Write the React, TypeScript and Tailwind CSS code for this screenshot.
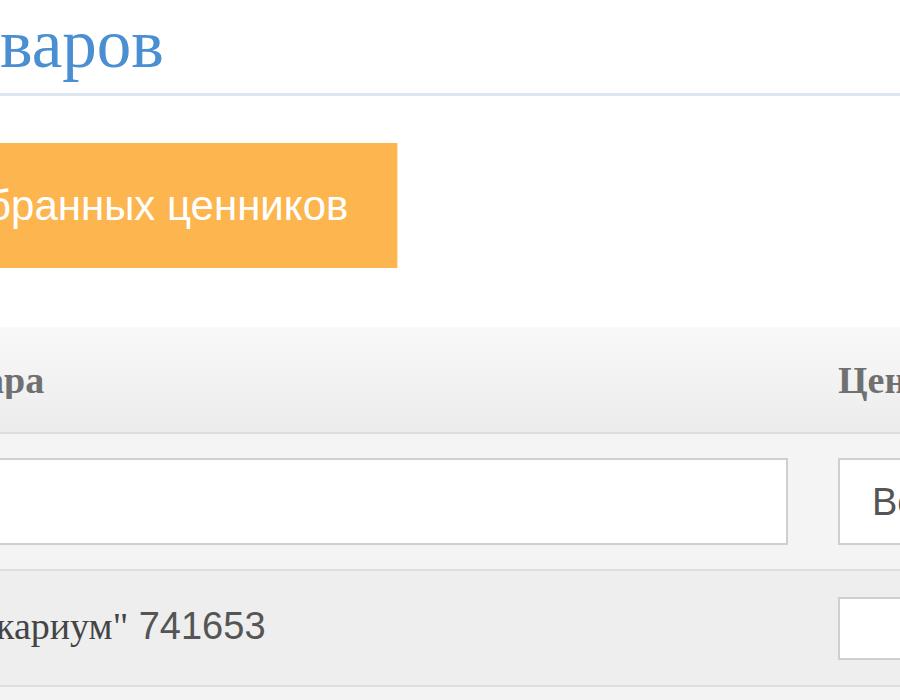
export default function App() {
  return (
    <div className="h-[700px] w-[900px] overflow-hidden bg-white font-['Liberation_Sans',Arial,sans-serif]">
      {/* Page title */}
      <h1 className="pt-[10px] font-['Liberation_Serif','Times_New_Roman',serif] text-[69px] font-normal leading-none whitespace-nowrap text-[#4a8fd1]">
        варов
      </h1>
      <div className="mt-[14px] h-[3px] bg-[#dde7f1]" />

      {/* Print button */}
      <div className="mt-[47px] flex h-[125px] w-[398px] items-center overflow-hidden border-r border-[#fde3b8] bg-[#fdb54f]">
        <span className="-ml-[13px] whitespace-nowrap text-[42px] leading-none text-white">бранных ценников</span>
      </div>

      {/* Table */}
      <div className="mt-[59px]">
        <div className="grid h-[107px] grid-cols-[838px_1fr] items-center border-b-2 border-[#dcdcdc] bg-gradient-to-b from-[#f9f9f9] to-[#ececec] font-['Liberation_Serif','Times_New_Roman',serif] text-[38px] font-bold leading-none text-[#707070]">
          <div className="overflow-hidden whitespace-nowrap">
            <span className="-ml-[15px] inline-block">ара</span>
          </div>
          <div className="whitespace-nowrap">Цена</div>
        </div>

        <div className="grid h-[137px] grid-cols-[788px_1fr] items-center gap-x-[50px] border-b-2 border-[#dedede] bg-[#f4f4f4]">
          <div className="h-[87px] border-2 border-l-0 border-[#cfcfcf] bg-white" />
          <div className="flex h-[87px] items-center border-2 border-r-0 border-[#cfcfcf] bg-white pl-[32px] text-[38px] leading-none whitespace-nowrap text-[#555]">
            Все
          </div>
        </div>

        <div className="grid h-[116px] grid-cols-[838px_1fr] items-center border-b-2 border-[#dedede] bg-[#eeeeee]">
          <div className="overflow-hidden whitespace-nowrap pb-[4px] text-[38px] leading-none text-[#444]">
            <span className="-ml-[4px] inline-block font-['Liberation_Serif','Times_New_Roman',serif]">кариум"</span>{' '}
            <span className="text-[#555]">741653</span>
          </div>
          <div className="h-[63px] border-2 border-r-0 border-[#cfcfcf] bg-white" />
        </div>
        <div className="h-[40px] bg-[#f3f3f3]" />
      </div>
    </div>
  )
}
